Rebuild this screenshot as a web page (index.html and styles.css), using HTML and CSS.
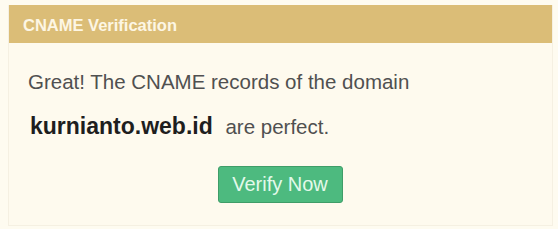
FILE: index.html
```html
<!DOCTYPE html>
<html lang="en">
<head>
  <meta charset="UTF-8" />
  <meta name="viewport" content="width=device-width, initial-scale=1.0"/>
  <title>CNAME Verification</title>
  <link rel="stylesheet" href="styles.css">
</head>
<body>
  <div class="panel">
    <div class="panel-head">CNAME Verification</div>
    <div class="panel-body">
      <p class="msg">Great! The CNAME records of the domain</p>
      <p class="msg msg-domain"><strong class="domain">kurnianto.web.id</strong> are perfect.</p>
      <div class="actions">
        <button class="btn-verify">Verify Now</button>
      </div>
    </div>
  </div>
</body>
</html>
```

FILE: styles.css
```css
body {
  margin: 0;
  padding: 5px 5px 0 8px;
  background: #fefbf0;
  font-family: "Liberation Sans", Arial, sans-serif;
}

.panel {
  background: #fefaee;
  border: 1px solid #f5f0e2;
  border-top: none;
  height: 221px;
  box-sizing: border-box;
}

.panel-head {
  background: #dbbd77;
  color: #fdf6e4;
  font-weight: bold;
  font-size: 16.5px;
  height: 38px;
  line-height: 36px;
  padding: 2px 0 0 14px;
  box-sizing: border-box;
}

.panel-body {
  padding: 27px 20px 0 19px;
}

.msg {
  margin: 0;
  font-size: 20.5px;
  line-height: 24px;
  color: #505050;
}

.msg-domain {
  margin-top: 18px;
  line-height: 28px;
}

.domain {
  font-size: 23px;
  color: #1e1e1e;
  margin-left: 2px;
  margin-right: 7px;
}

.actions {
  text-align: center;
  margin-top: 25px;
}

.btn-verify {
  background: #4dba7f;
  border: 1px solid #3f9d68;
  border-radius: 3px;
  color: #e3f9ea;
  font-family: "Liberation Sans", Arial, sans-serif;
  font-size: 20px;
  width: 125px;
  height: 37px;
  padding: 0;
}
```
